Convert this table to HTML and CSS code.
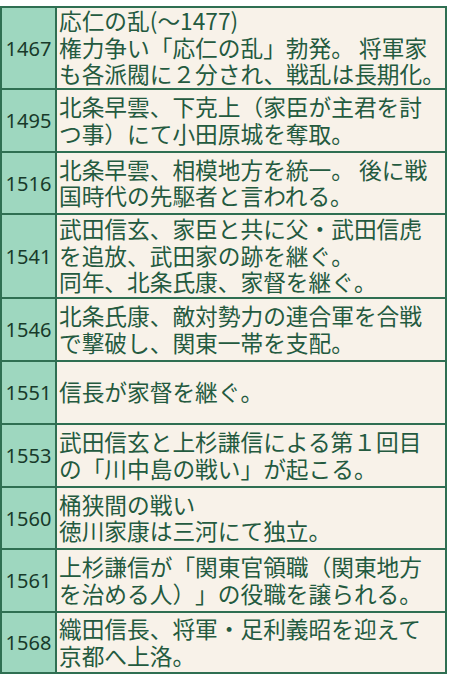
FILE: index.html
```html
<!DOCTYPE html>
<html lang="ja">
<head>
<meta charset="utf-8">
<link rel="stylesheet" href="styles.css">
</head>
<body>
<div class="table">
  <div class="row r80"><div class="year">1467</div><div class="text">応仁の乱(～1477)<br>権力争い「応仁の乱」勃発。 将軍家<br>も各派閥に２分され、戦乱は長期化。</div></div>
  <div class="row r61"><div class="year">1495</div><div class="text">北条早雲、下克上（家臣が主君を討<br>つ事）にて小田原城を奪取。</div></div>
  <div class="row r60"><div class="year">1516</div><div class="text">北条早雲、相模地方を統一。 後に戦<br>国時代の先駆者と言われる。</div></div>
  <div class="row r82"><div class="year">1541</div><div class="text">武田信玄、家臣と共に父・武田信虎<br>を追放、武田家の跡を継ぐ。<br>同年、北条氏康、家督を継ぐ。</div></div>
  <div class="row r61"><div class="year">1546</div><div class="text">北条氏康、敵対勢力の連合軍を合戦<br>で撃破し、関東一帯を支配。</div></div>
  <div class="row r61"><div class="year">1551</div><div class="text">信長が家督を継ぐ。</div></div>
  <div class="row r61"><div class="year">1553</div><div class="text">武田信玄と上杉謙信による第１回目<br>の「川中島の戦い」が起こる。</div></div>
  <div class="row r60"><div class="year">1560</div><div class="text">桶狭間の戦い<br>徳川家康は三河にて独立。</div></div>
  <div class="row r61"><div class="year">1561</div><div class="text">上杉謙信が「関東官領職（関東地方<br>を治める人）」の役職を譲られる。</div></div>
  <div class="row r59 last"><div class="year">1568</div><div class="text">織田信長、将軍・足利義昭を迎えて<br>京都へ上洛。</div></div>
</div>
</body>
</html>
```

FILE: styles.css
```css
html, body {
  margin: 0;
  padding: 0;
  background: #ffffff;
}

body {
  font-family: "Noto Sans CJK JP", "Noto Sans", sans-serif;
}

.table {
  margin-top: 6px;
  width: 443px;
  border: 2px solid #2f6f52;
  background: #f8f2e9;
}

.row {
  display: grid;
  grid-template-columns: 55px 1fr;
  border-bottom: 2px solid #2f6f52;
}

.row.last {
  border-bottom: none;
}

.r59 { height: 59px; }
.r60 { height: 60px; }
.r61 { height: 61px; }
.r80 { height: 80px; }
.r82 { height: 82px; }

.year {
  background: #9ed7bf;
  border-right: 2px solid #2f6f52;
  display: flex;
  align-items: center;
  justify-content: center;
  font-family: "Noto Sans", "Open Sans", sans-serif;
  font-size: 20px;
  color: #183a2a;
}

.text {
  display: flex;
  align-items: center;
  padding-left: 2px;
  font-size: 22.7px;
  line-height: 26.5px;
  color: #245a3f;
  white-space: nowrap;
  text-spacing-trim: space-all;
}
```
